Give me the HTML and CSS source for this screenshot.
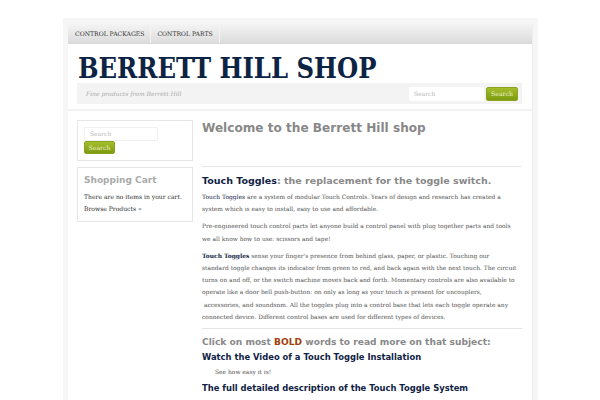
FILE: index.html
```html
<!DOCTYPE html>
<html>
<head>
<meta charset="utf-8">
<link rel="stylesheet" href="styles.css">
</head>
<body>
<div class="page">
  <div class="wrap">
    <nav class="nav">
      <a class="nav-item">CONTROL PACKAGES</a>
      <a class="nav-item">CONTROL PARTS</a>
    </nav>
    <header class="header">
      <h1 class="site-title">BERRETT HILL SHOP</h1>
      <div class="tagbar">
        <span class="tagline">Fine products from Berrett Hill</span>
        <div class="search">
          <span class="search-input">Search</span>
          <span class="btn">Search</span>
        </div>
      </div>
    </header>
    <div class="main">
      <aside class="sidebar">
        <div class="widget widget-search">
          <span class="search-input small">Search</span>
          <span class="btn">Search</span>
        </div>
        <div class="widget">
          <h3 class="widget-title">Shopping Cart</h3>
          <p class="widget-text">There are no items in your cart.</p>
          <p class="widget-text">Browse Products »</p>
        </div>
      </aside>
      <section class="content">
        <h2 class="page-title">Welcome to the Berrett Hill shop</h2>
        <hr class="rule first">
        <h3 class="sub"><span class="navy">Touch Toggles</span>: the replacement for the toggle switch.</h3>
        <p class="text"><span class="navy">Touch Toggles</span> are a system of modular Touch Controls. Years of design and research has created a system which is easy to install, easy to use and affordable.</p>
        <p class="text">Pre-engineered touch control parts let anyone build a control panel with plug together parts and tools<br>we all know how to use: scissors and tape!</p>
        <p class="text"><b class="navy">Touch Toggles</b> sense your finger's presence from behind glass, paper, or plastic. Touching our<br>standard toggle changes its indicator from green to red, and back again with the next touch. The circuit turns on and off, or the switch machine moves back and forth. Momentary controls are also available to operate like a door bell push-button: on only as long as your touch is present for uncouplers,<br>&nbsp;accessories, and soundsnm. All the toggles plug into a control base that lets each toggle operate any connected device. Different control bases are used for different types of devices.</p>
        <hr class="rule">
        <h3 class="sub click">Click on most <span class="bold">BOLD</span> words to read more on that subject:</h3>
        <h4 class="link">Watch the Video of a Touch Toggle Installation</h4>
        <p class="text indent">See how easy it is!</p>
        <h4 class="link">The full detailed description of the Touch Toggle System</h4>
        <h4 class="link">Berrett Hill will be at upcoming shows. Click for more details</h4>
      </section>
    </div>
  </div>
</div>
</body>
</html>
```
FILE: styles.css
```css
html, body { margin: 0; padding: 0; background: #fff; }
body { font-family: "DejaVu Serif", serif; color: #555; }
.page {
  margin: 18px 0 0 63px;
  width: 465px;
  padding: 6px 5px 0 5px;
  background: #f6f6f6;
  height: 400px;
}
.wrap {
  background: #fff;
  height: 100%;
  border-right: 1px solid #ececec;
}
.nav {
  height: 19px;
  display: flex;
  background: linear-gradient(#f4f4f4, #dcdcdc);
  border-bottom: 1px solid #d8d8d8;
}
.nav-item {
  font-size: 6.1px;
  color: #333;
  padding: 0 6px;
  line-height: 19px;
  border-right: 1px solid #f4f4f4;
}
.nav-item:first-child { padding-left: 7px; }
.header { padding: 0 10px 5px 9px; border-bottom: 2px solid #f2f2f2; }
.site-title {
  margin: 0;
  padding: 10px 0 0 1px;
  font-family: "DejaVu Serif Condensed", "DejaVu Serif", serif;
  font-stretch: condensed;
  font-weight: bold;
  font-size: 27px;
  line-height: 29px;
  color: #0d2344;
}
.tagbar {
  height: 21px;
  background: #f3f3f3;
  display: flex;
  align-items: center;
  justify-content: space-between;
  padding: 0 4px 0 9px;
}
.tagline { font-style: italic; font-size: 6px; color: #aaa; }
.search { display: flex; align-items: center; gap: 2px; }
.search-input {
  display: block;
  box-sizing: border-box;
  width: 75px;
  height: 14px;
  background: #fff;
  font-size: 6px;
  color: #bbb;
  line-height: 14px;
  padding-left: 5px;
}
.btn {
  display: block;
  box-sizing: border-box;
  width: 32px;
  text-align: center;
  height: 14px;
  line-height: 12px;
  font-size: 6.2px;
  color: #eef5d0;
  background: linear-gradient(#a3bd2c, #7d9a10);
  border: 1px solid #8aa51c;
  border-radius: 2px;
}
.main { display: flex; padding: 9px 10px 0 9px; gap: 9px; }
.sidebar { width: 116px; flex: none; display: flex; flex-direction: column; gap: 6px; }
.widget { border: 1px solid #e6e6e6; padding: 6px 6px 6px 6px; }
.widget-search { display: flex; flex-direction: column; align-items: flex-start; gap: 0; }
.widget-search .btn { width: 31px; height: 13px; line-height: 11px; }
.search-input.small { width: 74px; height: 14px; line-height: 12px; border: 1px solid #f0f0f0; }
.widget-title {
  margin: 0 0 5px;
  font-family: "DejaVu Sans", sans-serif;
  font-size: 9px;
  line-height: 12px;
  color: #aaa;
  font-weight: bold;
}
.widget-text { margin: 0; font-size: 6.05px; line-height: 12px; color: #333; }
.content { flex: 1; }
.page-title {
  margin: 0;
  font-family: "DejaVu Sans", sans-serif;
  font-size: 12.1px;
  font-weight: bold;
  color: #888;
  line-height: 17px;
}
.rule { border: 0; border-top: 1px solid #e6e6e6; margin: 5px 0 6px; }
.rule.first { margin-top: 29px; margin-bottom: 7px; }
.sub {
  margin: 0 0 3px;
  font-family: "DejaVu Sans", sans-serif;
  font-size: 9.5px;
  font-weight: bold;
  color: #888;
  line-height: 14px;
}
.navy { color: #102244; }
.text { margin: 0 0 5px; font-size: 5.95px; line-height: 12.2px; color: #555; }
.text b.navy { font-weight: bold; }
.click { font-size: 9.1px; margin-bottom: 1px; }
.bold { color: #a2400e; }
.link {
  margin: 0 0 2px;
  font-family: "DejaVu Sans", sans-serif;
  font-size: 8.4px;
  line-height: 14px;
  font-weight: bold;
  color: #102244;
}
.text.indent { padding-left: 13px; margin-bottom: 3px; }
```
